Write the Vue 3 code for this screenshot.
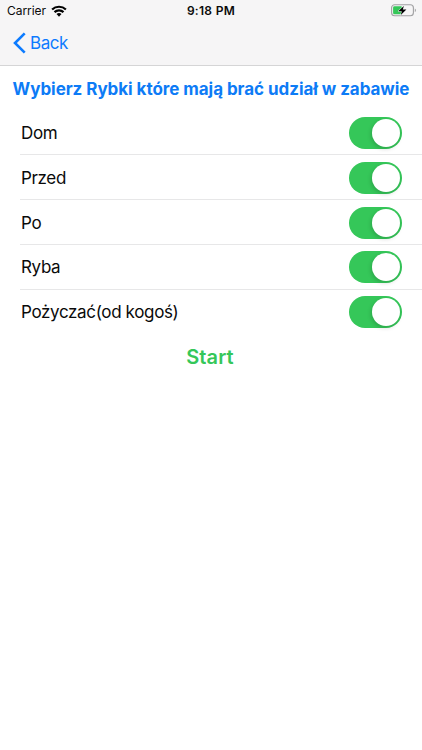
<template>
  <div class="screen">
    <header class="top">
      <div class="status-bar">
        <div class="carrier">
          <span class="carrier-name">Carrier</span>
          <svg class="wifi" viewBox="0 0 16 12" aria-hidden="true">
            <path d="M1.1 4.5a10 10 0 0 1 13.8 0" />
            <path d="M3.5 7.1a6.5 6.5 0 0 1 9 0" />
            <path class="wifi-dot" d="M5.5 9.1a3.7 3.7 0 0 1 5 0L8 11.7z" />
          </svg>
        </div>
        <span class="time">9:18 PM</span>
        <svg class="battery" viewBox="0 0 26 13" aria-hidden="true">
          <rect class="battery-case" x="0.6" y="0.8" width="21.8" height="11" rx="3" />
          <rect class="battery-level" x="2.1" y="2.3" width="9" height="8" rx="1.4" />
          <path class="battery-cap" d="M23.8 4.5c1.5.5 1.5 3.1 0 3.6z" />
          <path class="battery-bolt" d="M12.9 1.9 7.2 7.2h3.6l-1 3.9 5.6-5.5h-3.6z" />
        </svg>
      </div>
      <nav class="nav-bar">
        <button class="back" type="button">
          <svg class="chevron" viewBox="0 0 14 22" aria-hidden="true">
            <path d="M12.7 1.4 3 11l9.7 9.6" />
          </svg>
          <span class="back-label">Back</span>
        </button>
      </nav>
    </header>

    <h1 class="title">Wybierz Rybki które mają brać udział w zabawie</h1>

    <ul class="list">
      <li v-for="item in items" :key="item.name" class="row">
        <span class="row-label">{{ item.name }}</span>
        <button
          type="button"
          role="switch"
          :aria-checked="item.enabled"
          :aria-label="item.name"
          :class="['toggle', { 'toggle-on': item.enabled }]"
          @click="item.enabled = !item.enabled"
        >
          <span class="knob"></span>
        </button>
      </li>
    </ul>

    <button class="start" type="button">Start</button>
  </div>
</template>

<script setup>
import { ref } from 'vue'

const items = ref([
  { name: 'Dom', enabled: true },
  { name: 'Przed', enabled: true },
  { name: 'Po', enabled: true },
  { name: 'Ryba', enabled: true },
  { name: 'Pożyczać(od kogoś)', enabled: true }
])
</script>

<style>
body {
  background: #fff;
}
</style>

<style scoped>
.screen {
  display: flex;
  flex-direction: column;
  min-height: 100vh;
  font-family: Inter, 'Liberation Sans', sans-serif;
  color: #0a0a0a;
  background: #fff;
}

button {
  padding: 0;
  border: 0;
  background: none;
  font-family: inherit;
  cursor: pointer;
}

.top {
  box-sizing: border-box;
  height: 66px;
  background: #f6f5f6;
  border-bottom: 1px solid #d5d5d6;
}

.status-bar {
  display: grid;
  grid-template-columns: 1fr auto 1fr;
  align-items: center;
  height: 21px;
  padding: 0 5px 0 7px;
}

.carrier {
  display: flex;
  align-items: center;
  gap: 5px;
}

.carrier-name {
  font-size: 12px;
  letter-spacing: -0.05px;
}

.wifi {
  width: 16px;
  height: 12px;
  fill: none;
  stroke: #000;
  stroke-width: 2.2;
}

.wifi-dot {
  fill: #000;
  stroke: none;
}

.time {
  margin-right: 2px;
  font-size: 12px;
  font-weight: 600;
  letter-spacing: 0.3px;
}

.battery {
  justify-self: end;
  width: 26px;
  height: 13px;
}

.battery-case {
  fill: none;
  stroke: #a0a0a2;
  stroke-width: 1.1;
}

.battery-level {
  fill: #35c759;
}

.battery-cap {
  fill: #a0a0a2;
}

.battery-bolt {
  fill: #000;
  stroke: #f6f5f6;
  stroke-width: 1;
  paint-order: stroke;
}

.nav-bar {
  display: flex;
  align-items: center;
  height: 44px;
  padding-left: 12px;
}

.back {
  display: flex;
  align-items: center;
  gap: 4px;
  color: #0d7bff;
}

.chevron {
  width: 14px;
  height: 22px;
  fill: none;
  stroke: currentColor;
  stroke-width: 2.6;
}

.back-label {
  font-size: 17px;
  line-height: 22px;
  letter-spacing: -0.45px;
}

.title {
  display: flex;
  justify-content: center;
  margin: 0;
  padding: 12px 0 10.5px;
  font-size: 17px;
  font-weight: 700;
  line-height: 22px;
  letter-spacing: -0.05px;
  color: #0d7bf6;
  white-space: nowrap;
}

.list {
  margin: 0;
  padding: 0;
  list-style: none;
}

.row {
  display: flex;
  align-items: center;
  justify-content: space-between;
  box-sizing: border-box;
  height: 44.85px;
  margin-left: 20px;
  padding: 1px 20.5px 0 1px;
  border-bottom: 1px solid #e7e7e8;
}

.row:last-child {
  border-bottom-color: transparent;
}

.row-label {
  font-size: 17px;
  letter-spacing: -0.35px;
}

.toggle {
  display: flex;
  align-items: center;
  box-sizing: border-box;
  width: 52.5px;
  height: 32px;
  padding: 2px;
  border-radius: 16px;
  background: #e9e9ea;
}

.toggle-on {
  justify-content: flex-end;
  background: #35c759;
}

.knob {
  width: 28px;
  height: 28px;
  border-radius: 50%;
  background: #fff;
  box-shadow: -1px 2px 4px rgba(0, 0, 0, 0.16);
}

.start {
  align-self: center;
  margin-top: 9.25px;
  margin-right: 2px;
  font-size: 20px;
  font-weight: 600;
  line-height: 26px;
  letter-spacing: 0.1px;
  color: #35c759;
}
</style>
